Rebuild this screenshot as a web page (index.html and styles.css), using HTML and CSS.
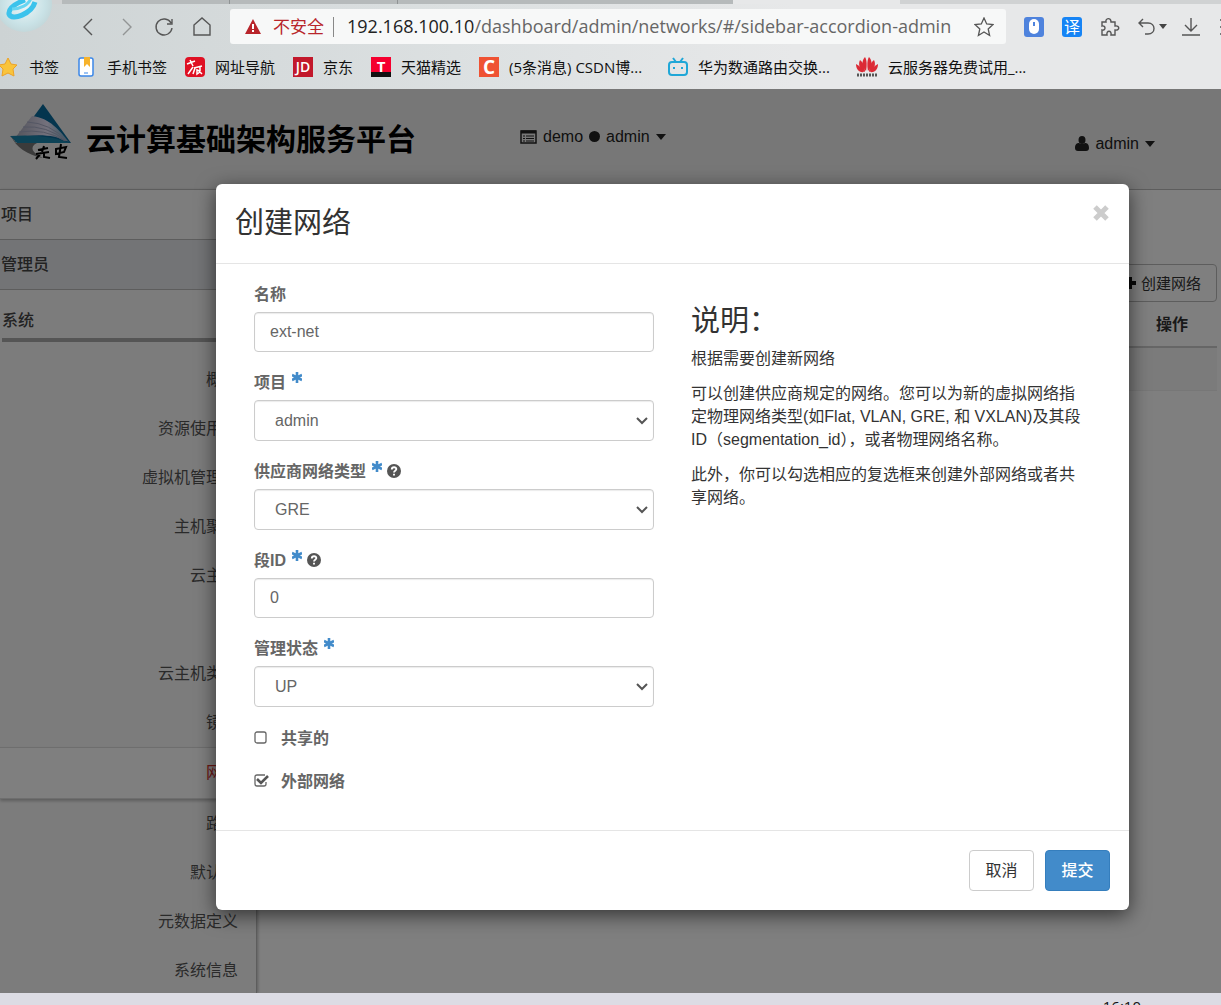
FILE: index.html
```html
<!DOCTYPE html>
<html lang="zh-CN">
<head>
<meta charset="utf-8">
<title>创建网络</title>
<link rel="stylesheet" href="styles.css">
</head>
<body>
<header class="browser">
  <div class="tabs"><span class="tab"></span><span class="tab"></span><span class="tab tab-last"></span><span class="tab tab-active"></span></div>
  <svg class="brand" width="56" height="34" viewBox="0 0 56 34"><defs><radialGradient id="halo"><stop offset="0" stop-color="#eef6f7"/><stop offset=".75" stop-color="#c9e2e6"/><stop offset="1" stop-color="#c3d8db"/></radialGradient></defs><circle cx="24" cy="4" r="28" fill="url(#halo)"/><path d="M35 2C32 13 12 22 9 14C8 8 17 3 25 0" fill="none" stroke="#3cc3ec" stroke-width="5"/><path d="M12 9C20 9 29 5 31-2" fill="none" stroke="#67d5f1" stroke-width="3"/></svg>
  <nav class="toolbar">
    <button class="tool" aria-label="后退"><svg width="20" height="20" viewBox="0 0 20 20"><path d="M14 2L6 10L14 18"/></svg></button>
    <button class="tool tool-off" aria-label="前进"><svg width="20" height="20" viewBox="0 0 20 20"><path d="M7 2L15 10L7 18"/></svg></button>
    <button class="tool" aria-label="刷新"><svg width="20" height="20" viewBox="0 0 20 20"><path d="M17 6A8 8 0 1 0 18 11M18 2V7H13"/></svg></button>
    <button class="tool" aria-label="主页"><svg width="20" height="20" viewBox="0 0 20 20"><path d="M2 8L10 1L18 8V18H2Z"/></svg></button>
    <div class="address">
      <svg width="16" height="15" viewBox="0 0 16 15"><path d="M8 0L16 15H0Z" fill="#b8252b"/><path d="M8 5V10M8 11V13" stroke="#fff" stroke-width="2"/></svg>
      <span class="insecure">不安全</span><span class="bar"></span>
      <span class="url"><b>192.168.100.10</b>/dashboard/admin/networks/#/sidebar-accordion-admin</span>
      <svg class="fav" width="20" height="20" viewBox="0 0 20 20"><path d="M10 1L12.700 7L19 7.600L14.200 12L15.600 18.500L10 15L4.400 18.500L5.800 12L1 7.600L7.300 7Z" fill="none" stroke="#555" stroke-width="1.300"/></svg>
    </div>
    <button class="tool" aria-label="鼠标"><svg width="20" height="20" viewBox="0 0 20 20"><rect width="20" height="20" rx="3" fill="#4f83dd" stroke="none"/><rect x="5" y="2" width="10" height="15" rx="5" fill="#fff" stroke="none"/><path d="M10 5V9" stroke="#4f83dd" stroke-width="2"/></svg></button>
    <button class="tool translate">译</button>
    <button class="tool" aria-label="扩展"><svg width="20" height="20" viewBox="0 0 20 20"><path d="M2 5H6C5 1 11 0 11 5H15V9C20 8 20 14 15 13V18H11C12 13 6 13 7 18H2V13C6 14 6 8 2 9Z"/></svg></button>
    <button class="tool undo" aria-label="撤销"><svg width="30" height="20" viewBox="0 0 30 20"><path d="M6 2L2 6L6 10M2 6H11C19 6 19 17 11 17H8"/><path d="M22 7H30L26 12Z" fill="#444" stroke="none"/></svg></button>
    <button class="tool" aria-label="下载"><svg width="20" height="20" viewBox="0 0 20 20"><path d="M10 1V14M4 8L10 14L16 8M1 18H19"/></svg></button>
    <button class="tool" aria-label="菜单"><svg width="20" height="20" viewBox="0 0 20 20"><path d="M1 3H19M1 10H19M1 17H19"/></svg></button>
  </nav>
  <nav class="bookmarks">
    <a href="#"><svg width="20" height="20" viewBox="0 0 20 20"><path d="M9 1L12 7L18 8L14 12L15 19L9 16L3 19L4 12L0 8L6 7Z" fill="#f9c43c" stroke="#eda326"/></svg>书签</a>
    <a href="#"><svg width="20" height="20" viewBox="0 0 20 20"><rect x="2" y="1" width="14" height="18" rx="2" fill="#fff" stroke="#3b87e8" stroke-width="1.500"/><path d="M7 0H13V10L10 7L7 10Z" fill="#f7b32b"/><path d="M7 16H11" stroke="#3b87e8"/></svg>手机书签</a>
    <a href="#"><svg width="20" height="20" viewBox="0 0 20 20"><rect width="20" height="20" rx="4" fill="#df1023"/><path d="M2 7L10 4M5 3L8 9M3 17L8 10M9 11L17 9M10 11L8 17M12 12V17L15 15M13 13L17 17M15 10V14" fill="none" stroke="#fff" stroke-width="1.500"/></svg>网址导航</a>
    <a href="#"><span class="site jd">JD</span>京东</a>
    <a href="#"><span class="site tmall">T</span>天猫精选</a>
    <a href="#"><span class="site csdn">C</span>(5条消息) CSDN博...</a>
    <a class="wide" href="#"><svg width="20" height="20" viewBox="0 0 20 20"><rect x="1" y="5" width="18" height="13" rx="3" fill="none" stroke="#20a7d7" stroke-width="2"/><path d="M5 1L8 5M15 1L12 5M6 10V12M14 10V12" stroke="#20a7d7" stroke-width="2"/></svg>华为数通路由交换...</a>
    <a class="wide" href="#"><svg width="22" height="20" viewBox="0 0 22 20"><g fill="#dc2a35"><path d="M10 14C5 9 6 3 9 0C11 3 11 9 10 14Z"/><path d="M12 14C17 9 16 3 13 0C11 3 11 9 12 14Z"/><path d="M9 15C3 12 2 7 4 3C7 5 9 10 9 15Z"/><path d="M13 15C19 12 20 7 18 3C15 5 13 10 13 15Z"/><path d="M8 15C3 16 0 12 0 7C4 9 7 12 8 15Z"/><path d="M14 15C19 16 22 12 22 7C18 9 15 12 14 15Z"/></g><path d="M1 18H21" stroke="#555" stroke-width="3" stroke-dasharray="2 1"/></svg>云服务器免费试用_...</a>
  </nav>
</header>

<div class="app">
  <header class="masthead">
    <svg class="logo" width="62" height="60" viewBox="0 0 62 60"><defs><linearGradient id="sail" x1="0" x2="1"><stop offset="0" stop-color="#a8a8b8"/><stop offset=".6" stop-color="#e8e4fa"/><stop offset="1" stop-color="#6ba7c4"/></linearGradient></defs><path d="M33 1L61 40L5 39Z" fill="#086a9c"/><path d="M22 13C40 15 50 28 59 39C43 31 25 31 5 35Z" fill="url(#sail)"/><path d="M17 19Q40 20 57 38M13 24Q37 22 56 38M9 29Q35 25 55 38" fill="none" stroke="#a9aec8"/><path d="M0 33C25 31 45 34 60 40H7Z" fill="#1984ad"/><path d="M1 33L6 40H27C19 44 22 50 33 55C17 52 6 44 1 33Z" fill="#777"/><g stroke="#000" stroke-width="2" fill="none"><path d="M34 43L32 49M28 47L38 45M26 51L39 49M31 50L26 56M34 50L34 54L40 55M51 41L49 54L57 55M46 46L56 44L54 49L46 51Z"/></g></svg>
    <span class="logo-name">云计算基础架构服务平台</span>
    <button class="menu project"><svg width="17" height="14" viewBox="0 0 17 14"><path d="M1 1H16V13H1Z" fill="none" stroke="#222" stroke-width="1.500"/><path d="M1 2H16" stroke="#222" stroke-width="3"/><path d="M3 6H5M6 6H14M3 8.500H5M6 8.500H14M3 11H5M6 11H14" stroke="#222"/></svg>demo <i class="dot"></i> admin<i class="caret"></i></button>
    <button class="menu user"><svg width="14" height="15" viewBox="0 0 14 15"><ellipse cx="7" cy="4" rx="3.500" ry="4" fill="#222"/><path d="M0 12C0 8 2 7 4 7Q7 9 10 7C12 7 14 8 14 12Q14 15 11 15H3Q0 15 0 12Z" fill="#222"/></svg>admin<i class="caret"></i></button>
  </header>
  <div class="columns">
    <nav class="sidebar">
      <a class="section" href="#">项目</a>
      <a class="section current" href="#">管理员</a>
      <a class="group" href="#">系统</a>
      <ul class="links">
        <li><a href="#">概况</a></li>
        <li><a href="#">资源使用量</a></li>
        <li><a href="#">虚拟机管理器</a></li>
        <li><a href="#">主机聚合</a></li>
        <li><a href="#">云主机</a></li>
        <li><a href="#">卷</a></li>
        <li><a href="#">云主机类型</a></li>
        <li><a href="#">镜像</a></li>
        <li class="active"><a href="#">网络</a></li>
        <li><a href="#">路由</a></li>
        <li><a href="#">默认值</a></li>
        <li><a href="#">元数据定义</a></li>
        <li><a href="#">系统信息</a></li>
      </ul>
    </nav>
    <main class="content">
      <button class="create"><svg width="12" height="12" viewBox="0 0 12 12"><path d="M6 0V12M0 6H12" stroke="#111" stroke-width="4"/></svg>创建网络</button>
      <table class="networks">
        <thead><tr><th>操作</th></tr></thead>
        <tbody><tr><td></td></tr></tbody>
      </table>
    </main>
  </div>

  <div class="overlay">
    <form class="modal" role="dialog" aria-labelledby="modal-title">
      <div class="modal-head">
        <h1 id="modal-title">创建网络</h1>
        <button type="button" class="close" aria-label="关闭"><svg width="18" height="18" viewBox="0 0 18 18"><path d="M3 3L15 15M15 3L3 15" stroke="#ccc" stroke-width="5"/></svg></button>
      </div>
      <div class="modal-body">
        <div class="fields">
          <div class="field">
            <label for="name">名称</label>
            <input id="name" type="text" value="ext-net">
          </div>
          <div class="field">
            <label for="tenant">项目<svg class="req" width="10" height="12" viewBox="0 0 10 12"><use href="#star"/></svg></label>
            <select id="tenant"><option>admin</option></select>
          </div>
          <div class="field">
            <label for="kind">供应商网络类型<svg class="req" width="10" height="12" viewBox="0 0 10 12"><use href="#star"/></svg><svg class="help" width="14" height="14" viewBox="0 0 14 14"><use href="#question"/></svg></label>
            <select id="kind"><option>GRE</option></select>
          </div>
          <div class="field">
            <label for="segment">段ID<svg class="req" width="10" height="12" viewBox="0 0 10 12"><use href="#star"/></svg><svg class="help" width="14" height="14" viewBox="0 0 14 14"><use href="#question"/></svg></label>
            <input id="segment" type="text" value="0">
          </div>
          <div class="field">
            <label for="state">管理状态<svg class="req" width="10" height="12" viewBox="0 0 10 12"><use href="#star"/></svg></label>
            <select id="state"><option>UP</option></select>
          </div>
          <label class="check"><input type="checkbox">共享的</label>
          <label class="check"><input type="checkbox" checked>外部网络</label>
        </div>
        <div class="about">
          <h2>说明：</h2>
          <p>根据需要创建新网络</p>
          <p>可以创建供应商规定的网络。您可以为新的虚拟网络指<br>定物理网络类型(如Flat, VLAN, GRE, 和 VXLAN)及其段<br>ID（segmentation_id），或者物理网络名称。</p>
          <p>此外，你可以勾选相应的复选框来创建外部网络或者共<br>享网络。</p>
        </div>
      </div>
      <div class="modal-foot">
        <button type="button" class="btn">取消</button>
        <button type="submit" class="btn primary">提交</button>
      </div>
    </form>
  </div>
</div>
<footer class="taskbar"><time>16:10</time></footer>

<svg class="defs" width="0" height="0"><defs>
  <g id="star"><path d="M5 0V11M0 3L10 8M10 3L0 8" stroke="#428bca" stroke-width="2.600"/></g>
  <g id="question"><circle cx="7" cy="7" r="7" fill="#555"/><path d="M4.800 5.500C4.800 2.500 9.500 2.700 9.300 5.300C9.200 6.800 7 6.700 7 8.500M7 9.700V11.500" fill="none" stroke="#fff" stroke-width="1.900"/></g>
</defs></svg>
</body>
</html>
```
FILE: styles.css
```css
* { box-sizing: border-box; }
body {
  margin: 0;
  height: 100vh;
  display: flex;
  flex-direction: column;
  overflow: hidden;
  font: 16px/23px "Liberation Sans", "Noto Sans CJK SC", sans-serif;
  color: #333;
}
button { font: inherit; color: inherit; border: 0; background: none; padding: 0; }
a { color: inherit; text-decoration: none; }
svg { flex: none; }
.defs { position: absolute; }

/* browser window */
.browser {
  position: relative;
  flex: none;
  height: 89px;
  background: linear-gradient(90deg, #cdd3d4, #dde1e2 40%, #e7e8e9 65%, #e7e8e9);
  font-family: "Open Sans", "Noto Sans CJK SC", sans-serif;
  overflow: hidden;
}
.tabs { display: flex; height: 4px; padding-left: 62px; background: #d0d2d3; }
.tab { flex: 0 0 168px; background: #b6babb; border-right: 1px solid #8f9394; }
.tab-last { flex-basis: 335px; border: 0; }
.tab-active { flex-basis: 167px; background: #e7e8e9; border: 0; }
.brand { position: absolute; left: 0; top: 0; }
.toolbar { display: flex; align-items: center; height: 45px; margin-right: -18px; padding-left: 78px; gap: 18px; }
.tool { flex: none; width: 20px; height: 20px; }
.tool svg { display: block; fill: none; stroke: #555; stroke-width: 1.4px; }
.tool-off { opacity: .5; }
.undo { width: 30px; margin: 0 -4px 0 -1px; }
.address {
  flex: 1;
  min-width: 0;
  display: flex;
  align-items: center;
  height: 35px;
  padding: 0 12px 0 15px;
  border-radius: 3px;
  background: #f7f8f8;
  white-space: nowrap;
}
.insecure { margin-left: 12px; font-size: 17px; color: #b8252b; }
.bar { width: 1px; height: 20px; margin: 0 13px 0 9px; background: #888; }
.url { flex: 1; font-size: 18px; color: #666; }
.url b { font-weight: 400; color: #222; }
.translate { border-radius: 3px; background: #1684f5; color: #fff; font-size: 16px; line-height: 20px; }
.bookmarks { display: flex; align-items: center; gap: 18px; height: 36px; margin-left: -1px; font-size: 15px; color: #111; white-space: nowrap; }
.bookmarks a { display: flex; align-items: center; gap: 10px; }
.bookmarks .wide { margin-left: 8px; }
.site { width: 20px; height: 20px; color: #fff; text-align: center; line-height: 20px; }
.jd { background: #c2182b; font-size: 14px; font-weight: 600; }
.tmall { background: linear-gradient(#f5002f 75%, #111 75%); font-weight: 700; line-height: 18px; }
.csdn { background: #ef5233; font-size: 19px; font-weight: 700; }

/* dashboard */
.app { position: relative; flex: 1; min-height: 0; display: flex; flex-direction: column; overflow: hidden; background: #fff; }
.masthead {
  flex: none;
  display: flex;
  align-items: flex-start;
  height: 101px;
  padding: 14px 66px 0 10px;
  background: #efefef;
  border-bottom: 1px solid #bbb;
  color: #222;
}
.logo-name { width: 434px; margin: 14px 0 0 14px; font: 700 30px/40px "Noto Sans CJK SC", sans-serif; color: #000; }
.menu { display: flex; align-items: center; gap: 6px; }
.project { margin-top: 22px; }
.user { margin: 29px 0 0 auto; }
.dot { width: 11px; height: 11px; border-radius: 50%; background: #222; }
.caret { border: 5px solid transparent; border-top: 6px solid #222; border-bottom: 0; }
.columns { flex: 1; display: flex; min-height: 0; }
.sidebar { flex: none; width: 257px; background: #f9f9f9; border-right: 1px solid #bbb; box-shadow: 1px 0 3px #bbb; }
.section { display: block; height: 50px; padding-left: 1px; line-height: 49px; font-weight: 500; color: #444; border-bottom: 1px solid #bbb; background: #fbfbfb; }
.current { background: #e6e9ed; }
.group { display: block; height: 52px; margin: 0 0 13px 2px; padding-top: 12px; line-height: 37px; border-bottom: 4px solid #aaa; font-weight: 500; color: #444; }
.links { margin: 0; padding: 0; list-style: none; text-align: right; color: #555; }
.links a { display: block; height: 49px; padding-right: 18px; line-height: 49px; }
.links .active { border: 1px solid #ddd; border-width: 1px 0; background: #fff; box-shadow: 0 2px 3px #bbb; color: #d9302c; }
.links .active a { height: 50px; line-height: 50px; }
.content { flex: 1; padding: 74px 4px 0 18px; display: flex; flex-direction: column; align-items: flex-end; }
.create { display: flex; align-items: center; gap: 5px; height: 38px; padding: 0 15px; border: 1px solid #bbb; border-radius: 4px; font-size: 15px; }
.networks { width: 100%; border-collapse: collapse; }
.networks th { height: 45px; padding: 0 29px 0 0; text-align: right; border-bottom: 2px solid #ccc; }
.networks td { height: 43px; background: #f7f7f7; border-bottom: 1px solid #eee; }

/* dialog */
.overlay { position: absolute; inset: 0; padding: 95px 92px 0 216px; background: rgba(0, 0, 0, .5); }
.modal { background: #fff; border-radius: 6px; box-shadow: 0 5px 20px rgba(0, 0, 0, .6); }
.modal-head { display: flex; justify-content: space-between; align-items: flex-start; padding: 20px 19px; border-bottom: 1px solid #e5e5e5; }
h1, h2 { margin: 0; font-size: 29px; font-weight: 400; line-height: 39px; }
.modal-head svg { display: block; }
.modal-body { display: grid; grid-template-columns: 400px 1fr; column-gap: 37px; padding: 20px 38px 38px; }
.field { margin-bottom: 20px; }
label { color: #666; font-weight: 700; }
.field label { display: flex; align-items: center; height: 20px; margin-bottom: 8px; }
.req { align-self: flex-start; margin-left: 6px; }
.help { margin-left: 5px; }
.field input, .field select {
  display: block;
  width: 100%;
  height: 40px;
  padding: 0 15px;
  border: 1px solid #ccc;
  border-radius: 4px;
  box-shadow: inset 0 1px 1px rgba(0, 0, 0, .08);
  background: #fff;
  font: inherit;
  color: #666;
}
.field select {
  appearance: none;
  height: 41px;
  padding: 0 20px;
  background: #fff url("data:image/svg+xml,%3Csvg xmlns='http://www.w3.org/2000/svg' width='12' height='8'%3E%3Cpath d='M1 1L6 6L11 1' fill='none' stroke='%23555' stroke-width='2'/%3E%3C/svg%3E") no-repeat right 5px center;
}
.check { display: flex; align-items: center; gap: 11px; height: 22px; }
.check + .check { margin-top: 21px; }
.check input {
  appearance: none;
  width: 16px;
  height: 14px;
  margin: 0;
  background: url("data:image/svg+xml,%3Csvg xmlns='http://www.w3.org/2000/svg' width='16' height='14'%3E%3Crect x='1' y='1' width='11' height='11' rx='2' fill='none' stroke='%23666' stroke-width='1.3'/%3E%3C/svg%3E") no-repeat;
}
.check input:checked { background-image: url("data:image/svg+xml,%3Csvg xmlns='http://www.w3.org/2000/svg' width='16' height='14'%3E%3Cpath d='M11 1H3Q1 1 1 3V10Q1 12 3 12H10Q12 12 12 10V8' fill='none' stroke='%23666' stroke-width='1.3'/%3E%3Cpath d='M3 5L7 9L14 2' fill='none' stroke='%23555' stroke-width='2.6'/%3E%3C/svg%3E"); }
.about { padding-top: 18px; white-space: nowrap; }
.about h2 { margin-bottom: 6px; }
.about p { margin: 0 0 12px; }
.modal-foot { display: flex; justify-content: flex-end; gap: 11px; padding: 19px; border-top: 1px solid #e5e5e5; }
.btn { width: 65px; height: 41px; border: 1px solid #ccc; border-radius: 4px; background: #fff; }
.primary { border-color: #357ebd; background: #428bca; color: #fff; font-weight: 500; }

.taskbar { flex: none; height: 12px; padding-right: 80px; overflow: hidden; background: #dcdce4; text-align: right; font: 15px/26px "Open Sans", sans-serif; color: #111; }
```
